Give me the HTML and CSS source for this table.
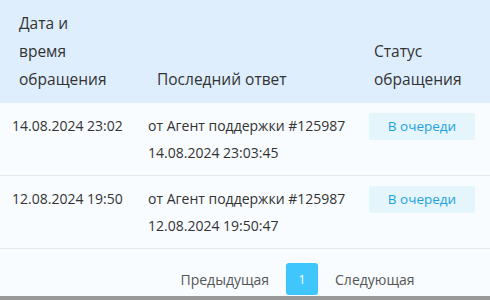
FILE: index.html
```html
<!DOCTYPE html>
<html lang="ru">
<head>
    <meta charset="UTF-8">
    <meta name="viewport" content="width=device-width, initial-scale=1.0">
    <title>Обращения</title>
    <link rel="stylesheet" href="styles.css">
</head>
<body>
    <div class="tickets">
        <table class="tickets-table">
            <thead>
                <tr>
                    <th class="col-date">Дата и<br>время<br>обращения</th>
                    <th class="col-reply">Последний ответ</th>
                    <th class="col-status">Статус<br>обращения</th>
                </tr>
            </thead>
            <tbody>
                <tr>
                    <td class="col-date">14.08.2024 23:02</td>
                    <td class="col-reply">от Агент поддержки #125987<br>14.08.2024 23:03:45</td>
                    <td class="col-status"><span class="badge">В очереди</span></td>
                </tr>
                <tr>
                    <td class="col-date">12.08.2024 19:50</td>
                    <td class="col-reply">от Агент поддержки #125987<br>12.08.2024 19:50:47</td>
                    <td class="col-status"><span class="badge">В очереди</span></td>
                </tr>
            </tbody>
        </table>
        <div class="pagination">
            <a href="#" class="page-link">Предыдущая</a>
            <a href="#" class="page-num active">1</a>
            <a href="#" class="page-link">Следующая</a>
        </div>
    </div>
    <div class="bottom-bar"></div>
</body>
</html>
```

FILE: styles.css
```css
* {
    box-sizing: border-box;
    margin: 0;
    padding: 0;
}

body {
    font-family: 'Open Sans', 'Noto Sans', sans-serif;
    background-color: #f8fcff;
    color: #333;
}

.tickets {
    background-color: #f8fcff;
}

.tickets-table {
    width: 100%;
    border-collapse: collapse;
}

.tickets-table th {
    background-color: #deeefd;
    font-weight: normal;
    font-size: 15.5px;
    line-height: 28px;
    text-align: left;
    vertical-align: bottom;
    padding: 9px 0 10px;
}

.tickets-table td {
    font-size: 14px;
    line-height: 27px;
    vertical-align: top;
    padding: 9px 0 9px;
    border-bottom: 1px solid #e3e9ef;
}

th.col-date {
    width: 136px;
    padding-left: 19px;
}

td.col-date {
    padding-left: 12px;
}

th.col-reply {
    width: 221px;
    padding-left: 21px;
}

td.col-reply {
    padding-left: 12px;
}

th.col-status {
    padding-left: 17px;
}

td.col-status {
    padding-left: 12px;
}

.badge {
    display: inline-block;
    width: 106px;
    height: 27px;
    text-align: center;
    font-size: 13.5px;
    background-color: #e4f5fc;
    color: #1da2df;
    border-radius: 2px;
}

.pagination {
    display: flex;
    justify-content: center;
    align-items: center;
    height: 47px;
    padding-left: 105px;
    padding-top: 13px;
    gap: 17px;
}

.page-link {
    font-size: 14px;
    color: #555;
    text-decoration: none;
}

.page-num {
    display: flex;
    justify-content: center;
    align-items: center;
    width: 32px;
    height: 32px;
    font-size: 13px;
    color: #fff;
    text-decoration: none;
    border-radius: 3px;
}

.page-num.active {
    background-color: #3fc6fd;
}

.bottom-bar {
    height: 4px;
    background-color: #999;
}
```
